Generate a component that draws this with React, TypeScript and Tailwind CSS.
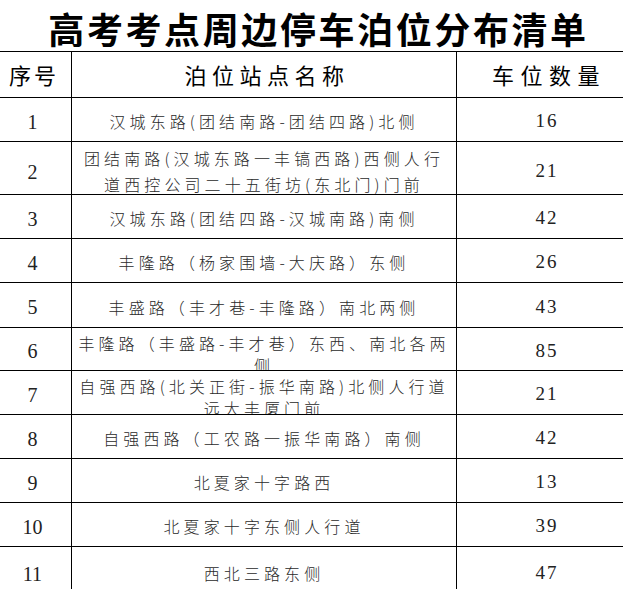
import React from "react";

type Row = { n: string; lines: string[]; v: string; h: string; lh: string; clip?: boolean };

const rows: Row[] = [
  { n: "1", lines: ["汉城东路(团结南路-团结四路)北侧"], v: "16", h: "h-[44px]", lh: "leading-[22px]" },
  { n: "2", lines: ["团结南路(汉城东路一丰镐西路)西侧人行", "道西控公司二十五街坊(东北门)门前"], v: "21", h: "h-[53px]", lh: "leading-[26px]" },
  { n: "3", lines: ["汉城东路(团结四路-汉城南路)南侧"], v: "42", h: "h-[44px]", lh: "leading-[22px]" },
  { n: "4", lines: ["丰隆路（杨家围墙-大庆路）东侧"], v: "26", h: "h-[44px]", lh: "leading-[22px]" },
  { n: "5", lines: ["丰盛路（丰才巷-丰隆路）南北两侧"], v: "43", h: "h-[45px]", lh: "leading-[22px]" },
  { n: "6", lines: ["丰隆路（丰盛路-丰才巷）东西、南北各两", "侧"], v: "85", h: "h-[43px]", lh: "leading-[22px]", clip: true },
  { n: "7", lines: ["自强西路(北关正街-振华南路)北侧人行道", "远大丰厦门前"], v: "21", h: "h-[44px]", lh: "leading-[22px]", clip: true },
  { n: "8", lines: ["自强西路（工农路一振华南路）南侧"], v: "42", h: "h-[44px]", lh: "leading-[22px]" },
  { n: "9", lines: ["北夏家十字路西"], v: "13", h: "h-[44px]", lh: "leading-[22px]" },
  { n: "10", lines: ["北夏家十字东侧人行道"], v: "39", h: "h-[44px]", lh: "leading-[22px]" },
  { n: "11", lines: ["西北三路东侧"], v: "47", h: "h-[50px]", lh: "leading-[22px]" },
];

const cjk = "font-['Noto_Sans_CJK_SC',sans-serif]";
const serif = "font-['Liberation_Serif','Noto_Sans_CJK_SC',serif]";

export default function App() {
  return (
    <div className="w-[623px] h-[589px] overflow-hidden bg-white">
      <div className={`h-[51px] flex items-center justify-center pl-[14px] pt-[4px] text-[36px] font-bold tracking-[2.6px] text-black ${cjk}`}>
        高考考点周边停车泊位分布清单
      </div>
      <div className="ml-[-6px] w-[645px] border-t border-black">
        <div className={`grid grid-cols-[78px_385px_182px] h-[46px] border-b border-black text-[22px] text-black ${cjk}`}>
          <div className="border-r border-black flex items-center justify-center pl-[3px] tracking-[3px]">序号</div>
          <div className="border-r border-black flex items-center justify-center pl-[6px] tracking-[5.5px]">泊位站点名称</div>
          <div className="flex items-center justify-center pl-[2px] tracking-[6.5px]">车位数量</div>
        </div>
        {rows.map((r) => (
          <div key={r.n} className={`grid grid-cols-[78px_385px_182px] ${r.h} border-b border-black`}>
            <div className={`border-r border-black flex items-center justify-center pt-[4px] text-[20px] text-[#222] ${serif}`}>{r.n}</div>
            <div
              className={`border-r border-black flex flex-col ${r.clip ? "justify-start pt-[4px] overflow-hidden" : "justify-center pt-[3px]"} items-center text-[16px] text-[#2a2a2a] tracking-[4.1px] ${r.lh} ${cjk} font-light`}
            >
              {r.lines.map((l, i) => (
                <div key={i} className="whitespace-nowrap">{l}</div>
              ))}
            </div>
            <div className={`flex items-center justify-center pt-[4px] pr-[2px] text-[19px] text-[#222] tracking-[2px] ${serif}`}>{r.v}</div>
          </div>
        ))}
      </div>
    </div>
  );
}
